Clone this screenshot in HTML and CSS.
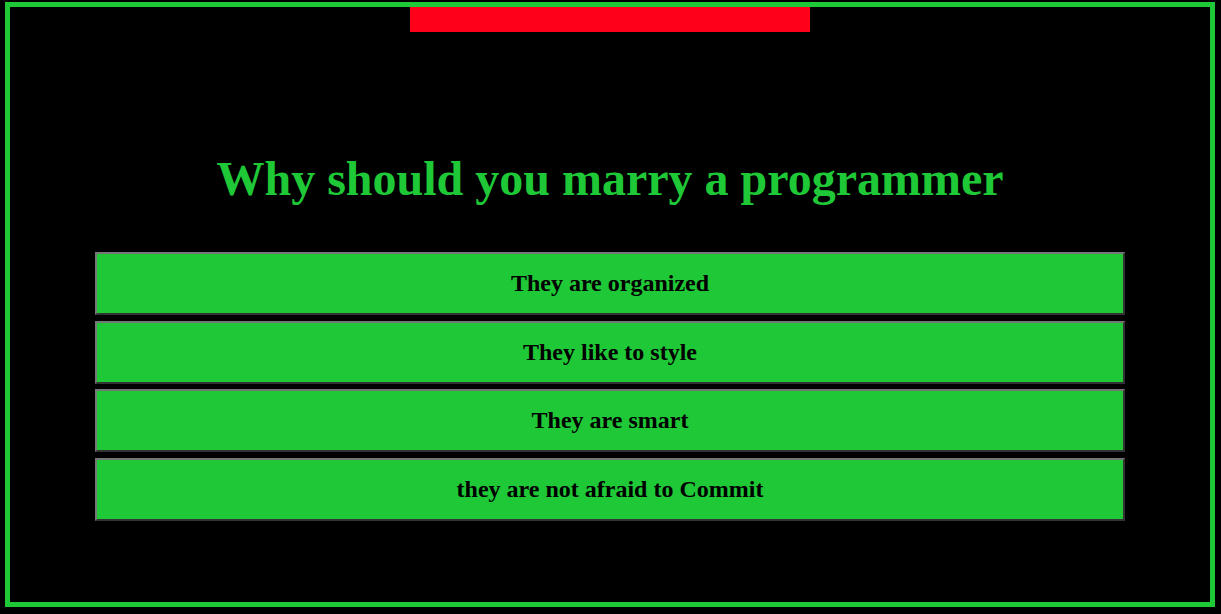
FILE: index.html
```html
<!DOCTYPE html>
<html>
<head>
<meta charset="utf-8">
<link rel="stylesheet" href="styles.css">
</head>
<body>
<div class="frame">
  <div class="bar"></div>
  <h1 class="title">Why should you marry a programmer</h1>
  <div class="list">
    <button class="item">They are organized</button>
    <button class="item">They like to style</button>
    <button class="item">They are smart</button>
    <button class="item">they are not afraid to Commit</button>
  </div>
</div>
</body>
</html>
```
FILE: styles.css
```css
html, body {
  margin: 0;
  padding: 0;
  background: #000;
}
.frame {
  margin: 2px 6px 0 5px;
  height: 595px;
  border: 5px solid #1fc836;
  display: flex;
  flex-direction: column;
  align-items: center;
}
.bar {
  width: 400px;
  height: 25px;
  background: #ff001b;
}
.title {
  margin: 119px 0 0;
  font-family: "Liberation Serif", "Times New Roman", serif;
  font-weight: bold;
  font-size: 48px;
  line-height: 56px;
  color: #1fc836;
}
.list {
  margin-top: 45px;
  width: 1030px;
  display: flex;
  flex-direction: column;
  gap: 5.7px;
}
.item {
  height: 63px;
  box-sizing: border-box;
  background: #1fc836;
  border: 2px solid;
  border-color: #767676 #333 #333 #767676;
  font-family: "Liberation Serif", "Times New Roman", serif;
  font-weight: bold;
  font-size: 24px;
  color: #000;
  padding: 0;
}
```
